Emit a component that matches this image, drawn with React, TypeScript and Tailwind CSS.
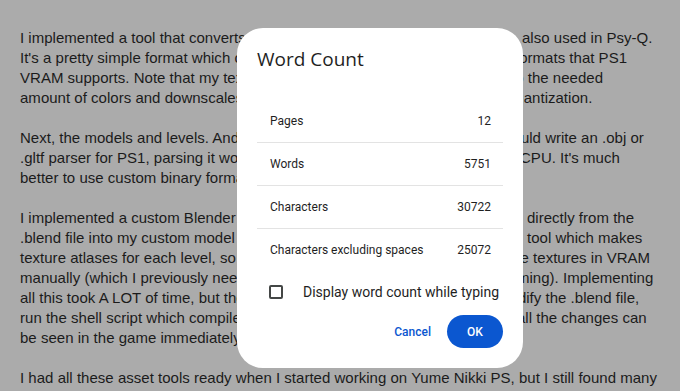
import React from "react";

// each line: text up to the dialog, text that shows again right of it, and where that part starts
type Line = { a: string; b?: string; w?: string };

const paragraphs: Line[][] = [
  [
    { a: "I implemented a tool that converts PNG images to TIM format, which is", b: "also used in Psy-Q.", w: "w-[502px]" },
    { a: "It's a pretty simple format which can store images in all the various pixel", b: "formats that PS1", w: "w-[495px]" },
    { a: "VRAM supports. Note that my texture tool also reduces the images down", b: "to the needed", w: "w-[491px]" },
    { a: "amount of colors and downscales textures, so I don't need to do manual", b: "quantization.", w: "w-[487px]" },
  ],
  [
    { a: "Next, the models and levels. And here's the thing \u2013 while you technically", b: "could write an .obj or", w: "w-[485px]" },
    { a: ".gltf parser for PS1, parsing it would be way too slow on the weak 33 MHz", b: "CPU. It's much", w: "w-[500px]" },
    { a: "better to use custom binary formats for everything." },
  ],
  [
    { a: "I implemented a custom Blender exporter which exports models and levels", b: "directly from the", w: "w-[507px]" },
    { a: ".blend file into my custom model format. I've also written a texture packing", b: "tool which makes", w: "w-[507px]" },
    { a: "texture atlases for each level, so I no longer need to carefully arrange all", b: "the textures in VRAM", w: "w-[488px]" },
    { a: "manually (which I previously needed to do back in my earlier PS1", b: "programming). Implementing", w: "w-[441px]" },
    { a: "all this took A LOT of time, but the workflow is great now: I can just", b: "modify the .blend file,", w: "w-[477px]" },
    { a: "run the shell script which compiles everything and runs the game and", b: "all the changes can", w: "w-[497px]" },
    { a: "be seen in the game immediately." },
  ],
  [
    { a: "I had all these asset tools ready when I started working on Yume Nikki PS, but I still found many" },
  ],
];

const stats = [
  { label: "Pages", value: "12" },
  { label: "Words", value: "5751" },
  { label: "Characters", value: "30722" },
  { label: "Characters excluding spaces", value: "25072" },
];

function WordCountDialog() {
  return (
    <div className="absolute left-[237px] top-[28px] w-[286px] rounded-[26px] bg-white px-5 pb-5 pt-[17px] text-[#1f1f1f]">
      <h2 className="h-[28px] text-[19px] leading-[28px] font-['Open_Sans',sans-serif]">Word Count</h2>
      <div className="mt-[27px] font-['Roboto',sans-serif] text-[12px]">
        {stats.map((s, i) => (
          <div
            key={s.label}
            className={
              i < stats.length - 1
                ? "flex h-[43px] items-center justify-between border-b border-[#e3e3e3] pl-[13px] pr-3"
                : "flex h-[42px] items-center justify-between pl-[13px] pr-3"
            }
          >
            <span>{s.label}</span>
            <span>{s.value}</span>
          </div>
        ))}
      </div>
      <label className="mt-px flex h-[40px] items-center pl-[12px] font-['Roboto',sans-serif] text-[14px]">
        <span className="h-[14px] w-[14px] rounded-[2px] border-2 border-[#444746]" />
        <span className="ml-5">Display word count while typing</span>
      </label>
      <div className="mt-[3px] flex justify-end gap-1 font-['Roboto',sans-serif] text-[12px] font-medium">
        <button className="h-[33px] rounded-full px-3 text-[#0b57d0]">Cancel</button>
        <button className="h-[33px] w-[56px] rounded-full bg-[#0b57d0] text-white">OK</button>
      </div>
    </div>
  );
}

export default function App() {
  return (
    <div className="relative h-[391px] w-[680px] overflow-hidden bg-[#ababab]">
      <div className="pl-5 pt-[28px] font-['Liberation_Sans',Arial,sans-serif] text-[15px] leading-5 tracking-[0.02px] text-[#1b1b1b]">
        {paragraphs.map((lines, i) => (
          <div key={i} className="mb-5">
            {lines.map((line, j) => (
              <div key={j} className="flex whitespace-nowrap">
                <span className={line.w ? line.w + " shrink-0" : ""}>{line.a}</span>
                {line.b && <span>{line.b}</span>}
              </div>
            ))}
          </div>
        ))}
      </div>
      <WordCountDialog />
    </div>
  );
}
